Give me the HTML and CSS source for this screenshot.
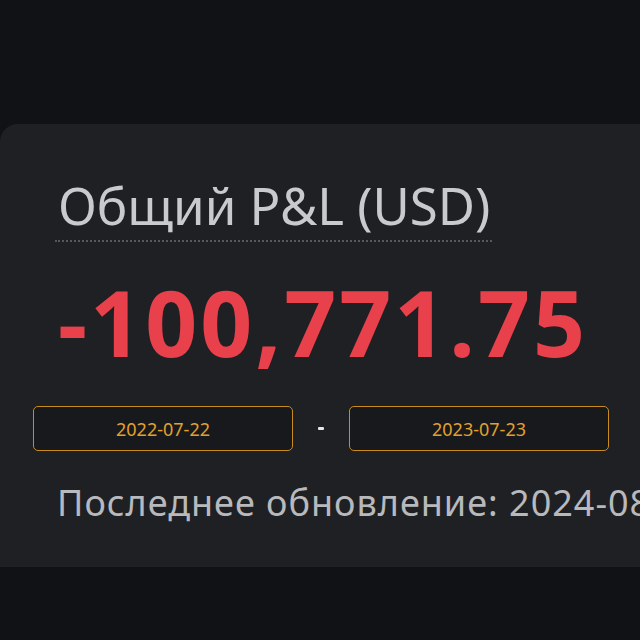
FILE: index.html
```html
<!DOCTYPE html>
<html lang="ru">
<head>
    <meta charset="UTF-8">
    <meta name="viewport" content="width=device-width, initial-scale=1.0">
    <title>Общий P&amp;L</title>
    <link rel="stylesheet" href="styles.css">
</head>
<body>

    <section class="pnl-card">
        <h2 class="pnl-title">Общий P&amp;L (USD)</h2>
        <div class="pnl-value">-100,771.75</div>

        <div class="date-range">
            <div class="date-box">2022-07-22</div>
            <span class="date-sep"></span>
            <div class="date-box">2023-07-23</div>
        </div>

        <p class="updated">Последнее обновление: 2024-08-01 12:00:00</p>
    </section>

</body>
</html>
```

FILE: styles.css
```css
body {
    margin: 0;
    background-color: #111216;
    font-family: 'Noto Sans', 'DejaVu Sans', sans-serif;
    overflow: hidden;
    height: 640px;
}
.pnl-card {
    margin-top: 124px;
    width: calc(100% + 40px);
    height: 443px;
    box-sizing: border-box;
    padding: 50px 0 0 33px;
    background-color: #1f2024;
    border-radius: 18px 0 0 0;
    overflow: hidden;
}
.pnl-title {
    display: inline-block;
    margin: 0 0 0 22px;
    padding: 0 2px 4px 3px;
    font-size: 51px;
    font-weight: 400;
    line-height: 62px;
    color: #c9cacd;
    border-bottom: 2px dotted #55575c;
}
.pnl-value {
    margin: 30px 0 0 25px;
    font-size: 91px;
    font-weight: 700;
    line-height: 100px;
    letter-spacing: 3px;
    color: #e8414b;
}
.date-range {
    display: flex;
    align-items: center;
    margin-top: 34px;
}
.date-box {
    width: 260px;
    height: 45px;
    box-sizing: border-box;
    display: flex;
    align-items: center;
    justify-content: center;
    border: 1.5px solid #c98b1f;
    border-radius: 5px;
    background-color: #18191c;
    color: #e0a12f;
    font-size: 18px;
}
.date-sep {
    width: 6px;
    height: 3px;
    margin: 0 25px;
    background-color: #e6e6e6;
    border-radius: 1px;
}
.updated {
    margin: 30px 0 0 24px;
    font-size: 36px;
    line-height: 44px;
    letter-spacing: 1px;
    color: #b8b9bc;
    white-space: nowrap;
}
```
